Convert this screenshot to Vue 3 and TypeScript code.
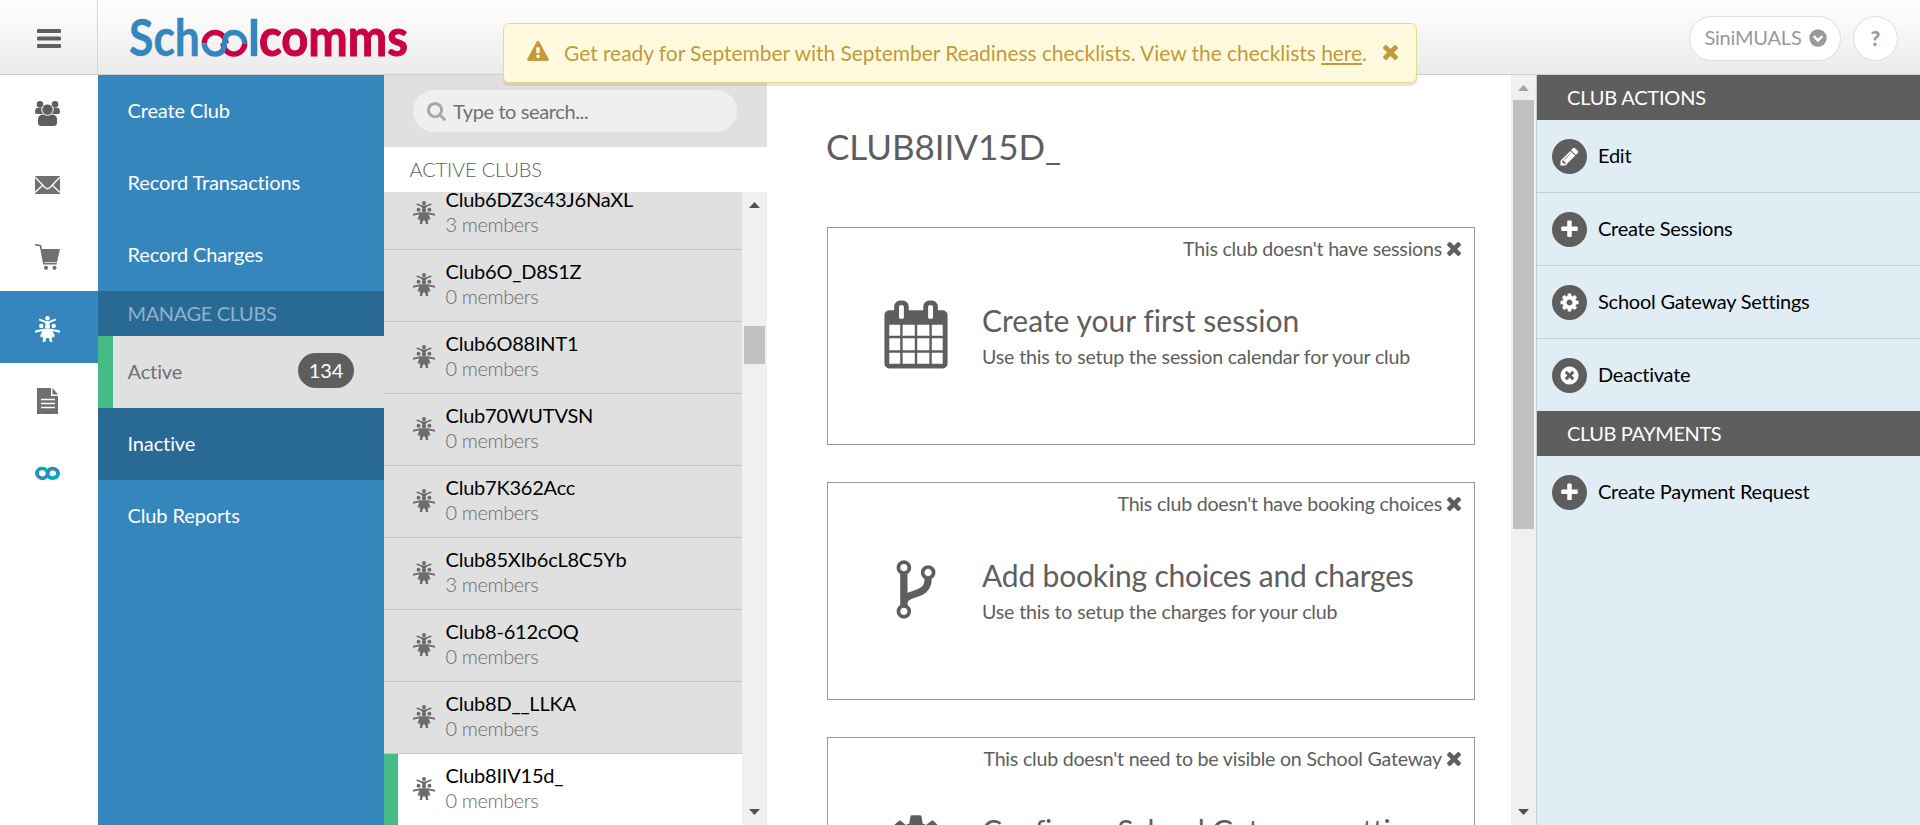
<script setup lang="ts">
interface Club { name: string; members: number; selected?: boolean }
interface Card { note: string; title: string; text: string; icon: string }
interface Action { label: string; icon: string }

const paths: Record<string, string> = {
  search: 'M1216 832q0-185-131.5-316.5t-316.5-131.5-316.5 131.5-131.5 316.5 131.5 316.5 316.5 131.5 316.5-131.5 131.5-316.5zm512 832q0 52-38 90t-90 38q-54 0-90-38l-343-342q-179 124-399 124-143 0-273.5-55.5t-225-150-150-225-55.5-273.5 55.5-273.5 150-225 225-150 273.5-55.5 273.5 55.5 225 150 150 225 55.5 273.5q0 220-124 399l343 343q37 37 37 90z',
  times: 'M1490 1322q0 40-28 68l-136 136q-28 28-68 28t-68-28l-294-294-294 294q-28 28-68 28t-68-28l-136-136q-28-28-28-68t28-68l294-294-294-294q-28-28-28-68t28-68l136-136q28-28 68-28t68 28l294 294 294-294q28-28 68-28t68 28l136 136q28 28 28 68t-28 68l-294 294 294 294q28 28 28 68z',
  plus: 'M1600 736v192q0 40-28 68t-68 28h-416v416q0 40-28 68t-68 28h-192q-40 0-68-28t-28-68v-416h-416q-40 0-68-28t-28-68v-192q0-40 28-68t68-28h416v-416q0-40 28-68t68-28h192q40 0 68 28t28 68v416h416q40 0 68 28t28 68z',
  cog: 'M1152 896q0-106-75-181t-181-75-181 75-75 181 75 181 181 75 181-75 75-181zm512-109v222q0 12-8 23t-20 13l-185 28q-19 54-39 91 35 50 107 138 10 12 10 25t-9 23q-27 37-99 108t-94 71q-12 0-26-9l-138-108q-44 23-91 38-16 136-29 186-7 28-36 28h-222q-14 0-24.5-8.5t-11.5-21.5l-28-184q-49-16-90-37l-141 107q-10 9-25 9-14 0-25-11-126-114-165-168-7-10-7-23 0-12 8-23 15-21 51-66.5t54-70.5q-27-50-41-99l-183-27q-13-2-21-12.5t-8-23.5v-222q0-12 8-23t19-13l186-28q14-46 39-92-40-57-107-138-10-12-10-24 0-10 9-23 26-36 98.5-107.5t94.5-71.5q13 0 26 10l138 107q44-23 91-38 16-136 29-186 7-28 36-28h222q14 0 24.5 8.5t11.5 21.5l28 184q49 16 90 37l142-107q9-9 24-9 13 0 25 10 129 119 165 170 7 8 7 22 0 12-8 23-15 21-51 66.5t-54 70.5q26 50 41 98l183 28q13 2 21 12.5t8 23.5z',
  pencil: 'M491 1536l91-91-235-235-91 91v107h128v128h107zm523-928q0-22-22-22-10 0-17 7l-542 542q-7 7-7 17 0 22 22 22 10 0 17-7l542-542q7-7 7-17zm-54-192l416 416-832 832h-416v-416zm683 96q0 53-37 90l-166 166-416-416 166-165q36-38 90-38 53 0 91 38l235 234q37 39 37 91z',
  timesCircle: 'M1277 1122q0-26-19-45l-181-181 181-181q19-19 19-45 0-27-19-46l-90-90q-19-19-46-19-26 0-45 19l-181 181-181-181q-19-19-45-19-27 0-46 19l-90 90q-19 19-19 46 0 26 19 45l181 181-181 181q-19 19-19 45 0 27 19 46l90 90q19 19 46 19 26 0 45-19l181-181 181 181q19 19 45 19 27 0 46-19l90-90q19-19 19-46zm387-226q0 209-103 385.5t-279.5 279.5-385.5 103-385.5-103-279.5-279.5-103-385.5 103-385.5 279.5-279.5 385.5-103 385.5 103 279.5 279.5 103 385.5z',
  warning: 'M1024 1375v-190q0-14-9.5-23.5t-22.5-9.5h-192q-13 0-22.5 9.5t-9.5 23.5v190q0 14 9.5 23.5t22.5 9.5h192q13 0 22.5-9.5t9.5-23.5zm-2-374l18-459q0-12-10-19-13-11-24-11h-220q-11 0-24 11-10 7-10 21l17 457q0 10 10 16.5t24 6.5h185q14 0 23.5-6.5t10.5-16.5zm-14-934l768 1408q35 63-2 126-17 29-46.5 46t-63.5 17h-1536q-34 0-63.5-17t-46.5-46q-37-63-2-126l768-1408q17-31 47-49t65-18 65 18 47 49z',
  calendar: 'M192 1664h288v-288h-288v288zm352 0h320v-288h-320v288zm-352-352h288v-320h-288v320zm352 0h320v-320h-320v320zm-352-384h288v-288h-288v288zm736 736h320v-288h-320v288zm-384-736h320v-288h-320v288zm768 736h288v-288h-288v288zm-384-352h320v-320h-320v320zm-352-864v-288q0-13-9.5-22.5t-22.5-9.5h-64q-13 0-22.5 9.5t-9.5 22.5v288q0 13 9.5 22.5t22.5 9.5h64q13 0 22.5-9.5t9.5-22.5zm736 864h288v-320h-288v320zm-384-384h320v-288h-320v288zm384 0h288v-288h-288v288zm32-480v-288q0-13-9.5-22.5t-22.5-9.5h-64q-13 0-22.5 9.5t-9.5 22.5v288q0 13 9.5 22.5t22.5 9.5h64q13 0 22.5-9.5t9.5-22.5zm384-64v1280q0 52-38 90t-90 38h-1408q-52 0-90-38t-38-90v-1280q0-52 38-90t90-38h128v-96q0-66 47-113t113-47h64q66 0 113 47t47 113v96h384v-96q0-66 47-113t113-47h64q66 0 113 47t47 113v96h128q52 0 90 38t38 90z',
  fork: 'M672 1472q0-40-28-68t-68-28-68 28-28 68 28 68 68 28 68-28 28-68zm0-1152q0-40-28-68t-68-28-68 28-28 68 28 68 68 28 68-28 28-68zm640 128q0-40-28-68t-68-28-68 28-28 68 28 68 68 28 68-28 28-68zm96 0q0 52-26 96.5t-70 69.5q-2 287-226 414-67 38-203 81-128 40-169.5 71t-41.5 100v26q44 25 70 69.5t26 96.5q0 80-56 136t-136 56-136-56-56-136q0-52 26-96.5t70-69.5v-820q-44-25-70-69.5t-26-96.5q0-80 56-136t136-56 136 56 56 136q0 52-26 96.5t-70 69.5v497q54-26 154-57 55-17 87.5-29.5t70.5-31 59-39.5 40.5-51 28-69.5 8.5-91.5q-44-25-70-69.5t-26-96.5q0-80 56-136t136-56 136 56 56 136z',
}

const clubs: Club[] = [
  { name: 'Club6DZ3c43J6NaXL', members: 3 },
  { name: 'Club6O_D8S1Z', members: 0 },
  { name: 'Club6O88INT1', members: 0 },
  { name: 'Club70WUTVSN', members: 0 },
  { name: 'Club7K362Acc', members: 0 },
  { name: 'Club85XIb6cL8C5Yb', members: 3 },
  { name: 'Club8-612cOQ', members: 0 },
  { name: 'Club8D__LLKA', members: 0 },
  { name: 'Club8IIV15d_', members: 0, selected: true },
]

const cards: Card[] = [
  { note: "This club doesn't have sessions", title: 'Create your first session', text: 'Use this to setup the session calendar for your club', icon: 'calendar' },
  { note: "This club doesn't have booking choices", title: 'Add booking choices and charges', text: 'Use this to setup the charges for your club', icon: 'fork' },
  { note: "This club doesn't need to be visible on School Gateway", title: 'Configure School Gateway settings', text: 'Use this to setup School Gateway for your club', icon: 'cog' },
]

const actions: Action[] = [
  { label: 'Edit', icon: 'pencil' },
  { label: 'Create Sessions', icon: 'plus' },
  { label: 'School Gateway Settings', icon: 'cog' },
  { label: 'Deactivate', icon: 'timesCircle' },
]
</script>

<template>
  <div class="page">
    <svg class="defs" width="0" height="0">
      <symbol id="kids" viewBox="0 0 25 26">
        <circle cx="12.5" cy="2.300" r="2.300" />
        <circle cx="6.300" cy="9.900" r="2.200" />
        <circle cx="18.700" cy="9.900" r="2.200" />
        <circle cx="12.500" cy="10.200" r="2.500" />
        <path d="M10 5h5v2.500l-.8.700h-3.400l-.8-.7zM8.300 12.700h8.400l1 9.300H7.300z" />
        <g fill="none" stroke="currentColor">
          <path d="M4.200 3.300l6.800 2.900h3l6.800-2.900" stroke-width="1.900" />
          <path d="M0 15.600l7.500-1.600 2 .3M25 15.600l-7.500-1.600-2 .3" stroke-width="2.100" />
          <path d="M9.300 13.300L6 20.700M15.700 13.300L19 20.700" stroke-width="2.100" />
          <path d="M10.200 20.500L8.800 26M14.800 20.500L16.200 26" stroke-width="2.700" />
        </g>
      </symbol>
    </svg>

    <header class="top">
      <button class="menu" aria-label="Menu">
        <svg width="24" height="20" viewBox="0 0 24 20"><rect y="0" width="24" height="4" rx="1" /><rect y="7.500" width="24" height="4" rx="1" /><rect y="15" width="24" height="4" rx="1" /></svg>
      </button>
      <svg class="logo" width="320" height="74" viewBox="0 0 320 74">
        <g class="blue">
          <text x="31" y="56" textLength="71" lengthAdjust="spacingAndGlyphs">Sch</text>
          <rect x="153" y="19" width="6" height="37" />
        </g>
        <text class="red" x="161" y="56" textLength="149" lengthAdjust="spacingAndGlyphs">comms</text>
        <g fill="none" stroke-width="5.400">
          <path d="M106.300 43.300a10.800 10.800 0 0 1 21.600 0M125.100 43.300a10.800 10.800 0 0 0 21.600 0" stroke="#ca0045" />
          <path d="M106.300 43.300a10.800 10.800 0 0 0 10.800 10.800c7 0 9.400-5 9.400-10.800s2.400-10.800 9.400-10.800a10.800 10.800 0 0 1 10.800 10.800" stroke="#3586bd" />
        </g>
      </svg>
      <div class="account">
        <button class="pill">SiniMUALS
          <svg width="18" height="18" viewBox="0 0 18 18"><circle cx="9" cy="9" r="8.700" fill="#999" /><path d="M4.700 7.200L9 11.500l4.300-4.300" fill="none" stroke="#fff" stroke-width="2.600" /></svg>
        </button>
        <button class="help">?</button>
      </div>
    </header>

    <div class="body">
      <nav class="rail">
        <a><svg width="25" height="25" viewBox="0 0 25 25">
          <circle cx="5" cy="3.400" r="3.300" /><circle cx="20" cy="3.400" r="3.300" />
          <path d="M1.500 7h5l1.500 6H2q-2 0-2-2.500Q0 8 1.500 7zM23.500 7h-5L17 13h6q2 0 2-2.500Q25 8 23.500 7z" />
          <path d="M3 25V18q0-4 5-4.500h9q5 .5 5 4.500v3.500Q22 25 18.500 25h-12Q3 25 3 21.500z" />
          <circle cx="12.500" cy="8.600" r="5.700" stroke="#fff" />
        </svg></a>
        <a class="soft"><svg width="25" height="18" viewBox="0 0 25 18"><rect width="25" height="18" /><path d="M0 1l10 10.500q2.500 2.500 5 0L25 1M0 16.500l8-7.500M25 16.500L17 9" fill="none" stroke="#fff" stroke-width="1.300" /></svg></a>
        <a class="soft"><svg width="25" height="26" viewBox="0 0 25 26"><path d="M0 .7l5.500 1 3.300 18h13" fill="none" stroke="#707070" stroke-width="1.600" /><path d="M6 5h19l-3 13.200H8.500z" /><circle cx="11" cy="23.800" r="2.100" /><circle cx="19.500" cy="23.800" r="2.100" /></svg></a>
        <a class="current"><svg width="25" height="26"><use href="#kids" /></svg></a>
        <a class="soft"><svg width="21" height="26" viewBox="0 0 21 26"><path d="M0 0h14v8h7v18H0zM15.500 0L21 6.500h-5.500z" /><path d="M4 11.500h14M4 15.500h14M4 19.500h14" stroke="#fff" stroke-width="1.300" /></svg></a>
        <a><svg width="25" height="15" viewBox="0 0 25 15"><g fill="none" stroke-width="3.600"><path d="M12.500 7.500a5.500 5.500 0 0 0-10.600-1.500v3" stroke="#00a9bd" /><path d="M2 6.500a5.500 5.500 0 0 0 9.500 4c1.500-2 1-5 3-7a5.500 5.500 0 0 1 8.600 4.500" stroke="#3586bd" /><path d="M12.800 9a5.500 5.500 0 0 0 10.400-1.500" stroke="#00a9bd" /></g></svg></a>
      </nav>

      <nav class="sub">
        <a>Create Club</a>
        <a>Record Transactions</a>
        <a>Record Charges</a>
        <h3>MANAGE CLUBS</h3>
        <a class="active">Active<span class="badge">134</span></a>
        <a class="dark">Inactive</a>
        <a>Club Reports</a>
      </nav>

      <section class="list">
        <div class="searchbar">
          <div class="search"><svg width="19" height="19" viewBox="64 128 1664 1664"><path :d="paths.search" /></svg>Type to search...</div>
        </div>
        <h3>ACTIVE CLUBS</h3>
        <div class="scroller">
          <div class="rows">
            <div v-for="club in clubs" :key="club.name" class="row" :class="{ selected: club.selected }">
              <svg width="22" height="23"><use href="#kids" /></svg>
              <div><div class="name">{{ club.name }}</div><div class="members">{{ club.members }} members</div></div>
            </div>
          </div>
          <div class="bar">
            <svg width="11" height="6" viewBox="0 0 11 6"><path d="M0 6L5.500 0 11 6z" /></svg>
            <div class="thumb"></div>
            <svg width="11" height="6" viewBox="0 0 11 6"><path d="M0 0h11L5.500 6z" /></svg>
          </div>
        </div>
      </section>

      <main class="main">
        <div class="content">
          <h1>CLUB8IIV15D_</h1>
          <article v-for="card in cards" :key="card.title" class="card">
            <div class="note">{{ card.note }}<svg width="14" height="14" viewBox="302 430 1188 1188"><path :d="paths.times" transform="translate(0 64)" /></svg></div>
            <div class="info">
              <svg width="68" height="69" viewBox="0 0 1792 1792"><path :d="paths[card.icon]" /></svg>
              <div><h2>{{ card.title }}</h2><p>{{ card.text }}</p></div>
            </div>
          </article>
        </div>
        <div class="bar">
          <svg class="off" width="11" height="6" viewBox="0 0 11 6"><path d="M0 6L5.500 0 11 6z" /></svg>
          <div class="thumb"></div>
          <svg width="11" height="6" viewBox="0 0 11 6"><path d="M0 0h11L5.500 6z" /></svg>
        </div>
      </main>

      <aside class="actions">
        <h3>CLUB ACTIONS</h3>
        <a v-for="action in actions" :key="action.label"><i><svg width="21" height="21" viewBox="0 0 1792 1792"><path :d="paths[action.icon]" /></svg></i><span>{{ action.label }}</span></a>
        <h3 class="tight">CLUB PAYMENTS</h3>
        <a><i><svg width="21" height="21" viewBox="0 0 1792 1792"><path :d="paths.plus" /></svg></i><span>Create Payment Request</span></a>
      </aside>
    </div>

    <div class="banner">
      <svg class="warn" width="22" height="20" viewBox="0 0 1792 1664"><path :d="paths.warning" /></svg>
      <span>Get ready for September with September Readiness checklists. View the checklists <u>here</u>.</span>
      <svg class="close" width="15" height="15" viewBox="302 430 1188 1188"><path :d="paths.times" transform="translate(0 64)" /></svg>
    </div>
  </div>
</template>

<style>
body { overflow: hidden; }
</style>

<style scoped>
* { box-sizing: border-box; }
.page { position: relative; height: 825px; display: flex; flex-direction: column; overflow: hidden; background: #fff; font-family: Lato, "Liberation Sans", sans-serif; font-size: 20px; line-height: 25px; color: #5e5e5e; }
svg { display: block; flex: none; fill: currentColor; }
.defs { position: absolute; }
h1, h2, h3, p { margin: 0; font-weight: 400; }
button { font: inherit; padding: 0; }
.top { flex: none; height: 75px; display: flex; border-bottom: 1px solid #cfcfcf; background: linear-gradient(#fff, #ebebeb); }
.menu { width: 98px; border: 0; border-right: 1px solid #d6d6d6; background: none; display: flex; align-items: center; justify-content: center; color: #5e5e5e; padding: 3px 0 0 0; }
.logo text { font-family: Lato, sans-serif; font-weight: 700; font-size: 51px; }
.blue { fill: #3586bd; stroke: #3586bd; stroke-width: 0.4; }
.red { fill: #ca0045; stroke: #ca0045; stroke-width: 1; }
.account { margin-left: auto; display: flex; gap: 12px; padding: 16px 22px 0 0; }
.pill, .help { height: 45px; border: 1px solid #ddd; border-radius: 23px; background: #fff; color: #999; display: flex; align-items: center; justify-content: center; }
.pill { width: 152px; gap: 7px; padding: 0 0 2px 1px; letter-spacing: -0.2px; }
.help { width: 45px; font-weight: 900; font-size: 21px; padding-bottom: 2px; }
.body { flex: 1; min-height: 0; display: flex; }
.rail { width: 98px; flex: none; background: #fff; }
.rail a { height: 72px; display: flex; align-items: center; justify-content: center; padding: 4px 3px 0 0; }
.rail .soft { color: #707070; }
.rail .current { background: #3586bd; color: #fff; padding-top: 3px; }
.sub { width: 286px; flex: none; background: #3586bd; color: #fff; }
.sub a { height: 72px; display: flex; align-items: center; padding: 0 0 2px 29.5px; letter-spacing: -0.12px; }
.sub h3 { height: 45px; line-height: 45px; padding-left: 29.5px; background: #296a95; color: #8eb2cb; font-size: 20px; letter-spacing: -0.37px; }
.sub .active { background: #e0e0e0; color: #707070; border-left: 15px solid #45bc88; padding: 0 30px 2px 14.5px; justify-content: space-between; }
.badge { width: 56px; height: 35px; border-radius: 18px; background: #5e5e5e; color: #fff; text-align: center; line-height: 34px; margin-top: -1px; }
.sub .dark { background: #296a95; }
.list { width: 383px; flex: none; display: flex; flex-direction: column; }
.searchbar { height: 72px; flex: none; background: #e0e0e0; padding: 15px 30px 0 29px; }
.search { height: 42px; border-radius: 21px; background: #efefef; display: flex; align-items: center; gap: 7px; padding-left: 14px; color: #707070; letter-spacing: -0.38px; }
.search svg { color: #a8a8a8; }
.list h3 { flex: none; height: 45px; line-height: 44px; padding-left: 25.5px; font-size: 20px; font-weight: 300; letter-spacing: -0.15px; }
.scroller { flex: 1; min-height: 0; display: flex; overflow: hidden; }
.rows { flex: 1; margin-top: -14px; background: #e0e0e0; }
.row { height: 72px; display: flex; align-items: center; gap: 10.5px; padding: 0 0 3px 29px; border-bottom: 1px solid #c6c6c6; color: #6c6c6c; }
.row .name { color: #000; letter-spacing: -0.22px; }
.row .members { font-weight: 300; letter-spacing: -0.4px; }
.row.selected { background: #fff; border-left: 14px solid #45bc88; padding-left: 15px; }
.bar { width: 25px; flex: none; background: #f0f0f0; display: flex; flex-direction: column; align-items: center; padding: 10px 0; color: #505050; }
.bar .thumb { width: 21px; background: #c1c1c1; height: 38px; margin: 118px 0 auto; }
.main { flex: 1; min-width: 0; display: flex; overflow: hidden; }
.content { flex: 1; padding: 48px 36px 0 60px; }
.content h1 { font-size: 35px; line-height: 46px; margin: 0 0 58px -1px; letter-spacing: -0.05px; }
.card { height: 218px; border: 1px solid #999; margin-bottom: 37px; }
.note { display: flex; justify-content: flex-end; align-items: center; gap: 5px; padding: 8px 13px 0 0; font-size: 19.6px; letter-spacing: -0.22px; }
.note svg { margin-top: 1px; }
.info { display: flex; gap: 32px; padding: 39px 0 0 54px; }
.info h2 { font-size: 30px; line-height: 38px; margin-top: 1px; letter-spacing: -0.18px; }
.card:nth-of-type(1) h2 { letter-spacing: 0.02px; }
.info p { line-height: 25px; margin-top: 5px; font-size: 19.6px; letter-spacing: -0.16px; }
.main .bar .thumb { height: 429px; margin-top: 9px; }
.bar .off { color: #a3a3a3; }
.actions { width: 384px; flex: none; background: #e0edf5; border-left: 1px solid #c2ced6; }
.actions h3 { height: 45px; line-height: 45px; padding-left: 30px; background: #5e5e5e; color: #fff; font-size: 20px; letter-spacing: -0.2px; }
.actions h3.tight { letter-spacing: -0.4px; }
.actions a { height: 73px; display: flex; align-items: center; gap: 11px; padding-left: 15px; border-bottom: 1px solid #c2ced6; color: #000; letter-spacing: -0.23px; }
.actions a span { padding-bottom: 2px; }
.actions a:nth-of-type(4) { height: 72px; border-bottom: 0; }
.actions a:nth-of-type(5) { border-bottom: 0; }
.actions i { width: 35px; height: 35px; border-radius: 50%; background: #5e5e5e; color: #fff; display: flex; align-items: center; justify-content: center; }
.banner { position: absolute; left: 503px; top: 23px; width: 914px; height: 60px; border: 1px solid #ecd68f; border-radius: 6px; background: #fffadd; box-shadow: 0 3px 0 rgba(160, 130, 50, 0.2); color: #c29a3c; font-size: 21px; display: flex; align-items: center; padding: 0 0 2px 23px; }
.banner span { margin-left: 15px; white-space: nowrap; letter-spacing: -0.05px; }
.banner .warn { margin-top: -2px; }
.banner .close { margin-left: 16px; }
</style>
